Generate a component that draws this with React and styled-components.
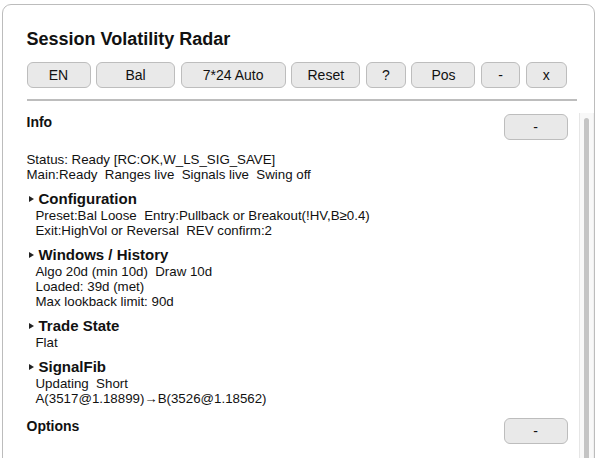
import React from "react";
import styled, { createGlobalStyle } from "styled-components";

const GlobalStyle = createGlobalStyle`
  html, body {
    margin: 0;
    padding: 0;
    background: #fff;
    overflow: hidden;
  }
  body {
    font-family: "Liberation Sans", Arial, Helvetica, sans-serif;
    color: #111;
  }
`;

const Panel = styled.div`
  box-sizing: border-box;
  margin: 4px 0 0 2px;
  width: 593px;
  height: 470px;
  border: 1.5px solid #bcbcbc;
  border-radius: 9px;
  background: #fff;
  display: flex;
  flex-direction: column;
`;

const Header = styled.div`
  padding: 24px 17px 0 23.5px;
`;

const Title = styled.h1`
  margin: 0;
  font-size: 18px;
  line-height: 21px;
  font-weight: 700;
`;

const Toolbar = styled.div`
  display: flex;
  gap: 5.6px;
  margin-top: 11.5px;
`;

const Button = styled.button`
  box-sizing: border-box;
  width: ${(p) => p.$w}px;
  height: 26px;
  padding: 0;
  font-family: "Liberation Sans", Arial, sans-serif;
  font-size: 14px;
  color: #111;
  background: #e9e9e9;
  border: 1.5px solid #bdbdbd;
  border-radius: 6px;
`;

const Divider = styled.div`
  margin-top: 11.5px;
  height: 1.5px;
  background: #bdbdbd;
`;

const Body = styled.div`
  flex: 1;
  min-height: 0;
  margin-top: 12px;
  display: flex;
`;

const Content = styled.div`
  flex: 1;
  min-width: 0;
  overflow: hidden;
  padding: 1px 11.5px 0 23.5px;
`;

const ScrollRail = styled.div`
  box-sizing: border-box;
  flex: 0 0 15px;
  padding: 5px 4px 0 4px;
  background: #f8f8f8;
  border-left: 1px solid #e6e6e6;
  border-right: 1px solid #f0f0f0;
`;

const ScrollThumb = styled.div`
  height: 100%;
  background: #c4c4c4;
  border-radius: 3px 3px 0 0;
`;

const GroupRow = styled.div`
  display: flex;
  justify-content: space-between;
  align-items: flex-start;
  margin-top: ${(p) => p.$top || 0}px;
`;

const GroupTitle = styled.div`
  font-size: 14px;
  line-height: 16px;
  font-weight: 700;
`;

const Lines = styled.div`
  margin-top: 12.5px;
  font-size: 13.3px;
  line-height: 15px;
  white-space: pre;
`;

const Section = styled.div`
  margin-top: 8px;
`;

const SectionHead = styled.div`
  display: flex;
  align-items: center;
  padding-left: 2px;
  gap: 5px;
  font-size: 15px;
  line-height: 18px;
  font-weight: 700;
`;

const Caret = styled.span`
  width: 0;
  height: 0;
  border-left: 5px solid #222;
  border-top: 3px solid transparent;
  border-bottom: 3px solid transparent;
`;

const Line = styled.div`
  padding-left: 9px;
  font-size: 13.3px;
  line-height: 15px;
  white-space: pre;
`;

const tools = [
  ["EN", 64],
  ["Bal", 79],
  ["7*24 Auto", 105],
  ["Reset", 69],
  ["?", 40],
  ["Pos", 64],
  ["-", 39],
  ["x", 41],
];

const sections = [
  {
    title: "Configuration",
    lines: [
      "Preset:Bal Loose  Entry:Pullback or Breakout(!HV,B\u22650.4)",
      "Exit:HighVol or Reversal  REV confirm:2",
    ],
  },
  {
    title: "Windows / History",
    lines: ["Algo 20d (min 10d)  Draw 10d", "Loaded: 39d (met)", "Max lookback limit: 90d"],
  },
  { title: "Trade State", lines: ["Flat"] },
  {
    title: "SignalFib",
    lines: ["Updating  Short", "A(3517@1.18899)\u2192B(3526@1.18562)"],
  },
];

export default function App() {
  return (
    <>
      <GlobalStyle />
      <Panel>
        <Header>
          <Title>Session Volatility Radar</Title>
          <Toolbar>
            {tools.map(([label, w]) => (
              <Button key={label} $w={w}>
                {label}
              </Button>
            ))}
          </Toolbar>
          <Divider />
        </Header>
        <Body>
          <Content>
            <GroupRow>
              <GroupTitle>Info</GroupTitle>
              <Button $w={64}>-</Button>
            </GroupRow>
            <Lines>
              <div>Status: Ready [RC:OK,W_LS_SIG_SAVE]</div>
              <div>Main:Ready  Ranges live  Signals live  Swing off</div>
            </Lines>
            {sections.map((s) => (
              <Section key={s.title}>
                <SectionHead>
                  <Caret />
                  {s.title}
                </SectionHead>
                {s.lines.map((l) => (
                  <Line key={l}>{l}</Line>
                ))}
              </Section>
            ))}
            <GroupRow $top={11.5}>
              <GroupTitle>Options</GroupTitle>
              <Button $w={64}>-</Button>
            </GroupRow>
          </Content>
          <ScrollRail>
            <ScrollThumb />
          </ScrollRail>
        </Body>
      </Panel>
    </>
  );
}
